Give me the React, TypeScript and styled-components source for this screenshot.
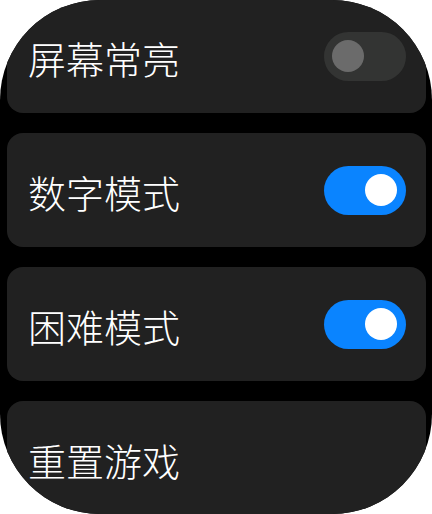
import React, { useState } from 'react';
import styled, { createGlobalStyle } from 'styled-components';

const GlobalStyle = createGlobalStyle`
    html, body {
        margin: 0;
        padding: 0;
        background: #ffffff;
    }
`;

interface Setting {
    label: string;
    toggle?: boolean;
    on?: boolean;
}

const settings: Setting[] = [
    { label: '屏幕常亮', toggle: true, on: false },
    { label: '数字模式', toggle: true, on: true },
    { label: '困难模式', toggle: true, on: true },
    { label: '重置游戏' },
];

const App = () => {
    const [values, setValues] = useState(settings.map(s => !!s.on));

    const flip = (i: number) => {
        setValues(v => v.map((x, j) => (j === i ? !x : x)));
    };

    return (
        <>
            <GlobalStyle />
            <Screen>
                <List>
                    {settings.map((s, i) => (
                        <Card key={s.label}>
                            <Label>{s.label}</Label>
                            {s.toggle && (
                                <Switch $on={values[i]} onClick={() => flip(i)}>
                                    <Knob $on={values[i]} />
                                </Switch>
                            )}
                        </Card>
                    ))}
                </List>
            </Screen>
        </>
    );
};

export default App;

const Screen = styled.div`
    width: 432px;
    height: 514px;
    border-radius: 100px;
    overflow: hidden;
    background: #000000;
`;

const List = styled.div`
    display: flex;
    flex-direction: column;
    gap: 20px;
    padding: 0 6px 0 7px;
    margin-top: -1px;
`;

const Card = styled.div`
    height: 114px;
    flex-shrink: 0;
    display: flex;
    align-items: center;
    justify-content: space-between;
    padding: 0 20px 0 21px;
    border-radius: 16px;
    background: #212121;
`;

const Label = styled.span`
    font-family: "Noto Sans CJK SC", "Noto Sans", sans-serif;
    font-size: 38px;
    font-weight: 300;
    color: #ffffff;
    margin-top: 3px;
`;

const Switch = styled.button<{ $on: boolean }>`
    width: 82px;
    height: 49px;
    border: none;
    padding: 0 9px 0 8px;
    border-radius: 25px;
    display: flex;
    align-items: center;
    justify-content: ${p => (p.$on ? 'flex-end' : 'flex-start')};
    background: ${p => (p.$on ? '#0a84ff' : '#333433')};
    cursor: pointer;
`;

const Knob = styled.span<{ $on: boolean }>`
    width: 32px;
    height: 32px;
    border-radius: 50%;
    background: ${p => (p.$on ? '#ffffff' : '#6b6b6b')};
`;
